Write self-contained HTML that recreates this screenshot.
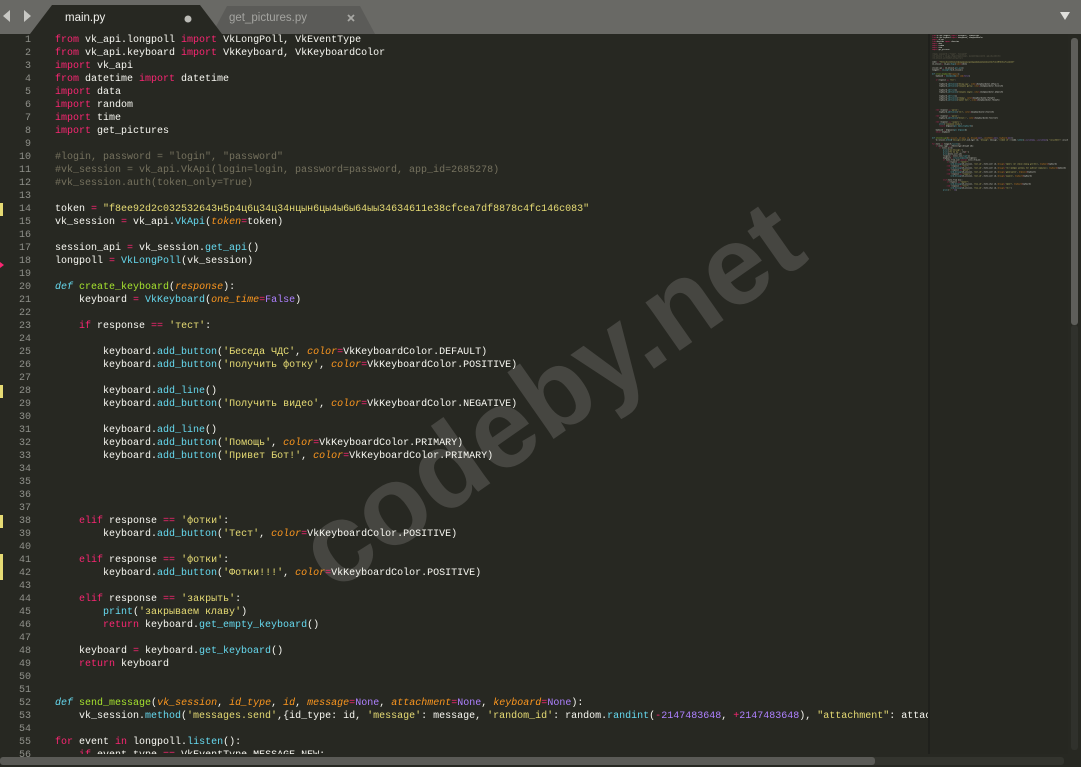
<!DOCTYPE html>
<html><head><meta charset="utf-8"><style>
*{margin:0;padding:0;box-sizing:border-box}
body{width:1081px;height:767px;overflow:hidden;background:#272822;position:relative;font-family:"Liberation Mono","DejaVu Sans Mono",monospace}
#bar{position:absolute;left:0;top:0;width:1081px;height:34px;background:#696965}
#gut{position:absolute;left:0;top:34px;width:50px;height:720px}
.ln{position:absolute;right:1051px;width:40px;text-align:right;font-size:10px;color:#8f908a;line-height:13px}
pre{position:absolute;left:55px;top:34px;font-size:10px;line-height:13px;color:#f8f8f2;font-family:"Liberation Mono","DejaVu Sans Mono",monospace;white-space:pre}
#codewrap{position:absolute;left:0;top:0;width:928px;height:754px;overflow:hidden;z-index:2}
.k{color:#f92672}.s{color:#e6db74}.c{color:#75715e}.f{color:#a6e22e}.b{color:#66d9ef}.p{color:#fd971f;font-style:italic}.n{color:#ae81ff}.d{color:#66d9ef;font-style:italic}
#wm{position:absolute;left:230px;top:330px;font-family:"Liberation Sans",sans-serif;font-weight:bold;font-size:112px;color:#464641;transform:rotate(-35deg);transform-origin:center;z-index:1;white-space:nowrap;width:640px;text-align:center}
#mini{position:absolute;left:928px;top:34px;width:140px;height:720px;overflow:hidden;background:#262721;border-left:2px solid #1f201c}
#mini pre{left:2px;top:1px;transform:scale(0.154);transform-origin:0 0}
.mk{position:absolute;left:0;width:3px;height:13px;background:#e6db74}
</style></head><body>
<div id="bar">
<svg width="1081" height="34" style="position:absolute;left:0;top:0">
<polygon points="212,34 227,6 360,6 375,34" fill="#5b5b58"/>
<polygon points="30,34 52,5 200,5 222,34" fill="#272822"/>
<polygon points="10,10 10,22 3,16" fill="#c8c8c4"/>
<polygon points="24,10 24,22 31,16" fill="#c8c8c4"/>
<circle cx="188" cy="19" r="3.5" fill="#bbbbb6"/>
<path d="M348,15 L354,21 M354,15 L348,21" stroke="#a8a8a4" stroke-width="1.8"/>
<polygon points="1060,12 1070,12 1065,20" fill="#e0e0dc"/>
</svg>
<div style="position:absolute;left:65px;top:12px;font-family:'Liberation Sans',sans-serif;font-size:11.5px;color:#f0f0ec">main.py</div>
<div style="position:absolute;left:229px;top:12px;font-family:'Liberation Sans',sans-serif;font-size:11.5px;color:#a4a4a0">get_pictures.py</div>
</div>
<div id="wm">codeby.net</div>
<div class="mk" style="top:203px"></div>
<div class="mk" style="top:385px"></div>
<div class="mk" style="top:515px"></div>
<div class="mk" style="top:554px;height:26px"></div>
<div style="position:absolute;left:0;top:262px;width:0;height:0;border-left:4px solid #f92672;border-top:3px solid transparent;border-bottom:3px solid transparent"></div>
<div id="gut"><pre style="left:0;top:0;width:31px;text-align:right;color:#8f908a">1
2
3
4
5
6
7
8
9
10
11
12
13
14
15
16
17
18
19
20
21
22
23
24
25
26
27
28
29
30
31
32
33
34
35
36
37
38
39
40
41
42
43
44
45
46
47
48
49
50
51
52
53
54
55
56</pre></div>
<div id="codewrap"><pre id="code"><span class="k">from</span> vk_api.longpoll <span class="k">import</span> VkLongPoll, VkEventType
<span class="k">from</span> vk_api.keyboard <span class="k">import</span> VkKeyboard, VkKeyboardColor
<span class="k">import</span> vk_api
<span class="k">from</span> datetime <span class="k">import</span> datetime
<span class="k">import</span> data
<span class="k">import</span> random
<span class="k">import</span> time
<span class="k">import</span> get_pictures

<span class="c">#login, password = "login", "password"</span>
<span class="c">#vk_session = vk_api.VkApi(login=login, password=password, app_id=2685278)</span>
<span class="c">#vk_session.auth(token_only=True)</span>

token <span class="k">=</span> <span class="s">"f8ee92d2c032532643н5р4ц6ц34ц34нцын6цы4ы6ы64ыы34634611e38cfcea7df8878c4fc146c083"</span>
vk_session <span class="k">=</span> vk_api.<span class="b">VkApi</span>(<span class="p">token</span><span class="k">=</span>token)

session_api <span class="k">=</span> vk_session.<span class="b">get_api</span>()
longpoll <span class="k">=</span> <span class="b">VkLongPoll</span>(vk_session)

<span class="d">def</span> <span class="f">create_keyboard</span>(<span class="p">response</span>):
    keyboard <span class="k">=</span> <span class="b">VkKeyboard</span>(<span class="p">one_time</span><span class="k">=</span><span class="n">False</span>)

    <span class="k">if</span> response <span class="k">==</span> <span class="s">'тест'</span>:

        keyboard.<span class="b">add_button</span>(<span class="s">'Беседа ЧДС'</span>, <span class="p">color</span><span class="k">=</span>VkKeyboardColor.DEFAULT)
        keyboard.<span class="b">add_button</span>(<span class="s">'получить фотку'</span>, <span class="p">color</span><span class="k">=</span>VkKeyboardColor.POSITIVE)

        keyboard.<span class="b">add_line</span>()
        keyboard.<span class="b">add_button</span>(<span class="s">'Получить видео'</span>, <span class="p">color</span><span class="k">=</span>VkKeyboardColor.NEGATIVE)

        keyboard.<span class="b">add_line</span>()
        keyboard.<span class="b">add_button</span>(<span class="s">'Помощь'</span>, <span class="p">color</span><span class="k">=</span>VkKeyboardColor.PRIMARY)
        keyboard.<span class="b">add_button</span>(<span class="s">'Привет Бот!'</span>, <span class="p">color</span><span class="k">=</span>VkKeyboardColor.PRIMARY)




    <span class="k">elif</span> response <span class="k">==</span> <span class="s">'фотки'</span>:
        keyboard.<span class="b">add_button</span>(<span class="s">'Тест'</span>, <span class="p">color</span><span class="k">=</span>VkKeyboardColor.POSITIVE)

    <span class="k">elif</span> response <span class="k">==</span> <span class="s">'фотки'</span>:
        keyboard.<span class="b">add_button</span>(<span class="s">'Фотки!!!'</span>, <span class="p">color</span><span class="k">=</span>VkKeyboardColor.POSITIVE)

    <span class="k">elif</span> response <span class="k">==</span> <span class="s">'закрыть'</span>:
        <span class="b">print</span>(<span class="s">'закрываем клаву'</span>)
        <span class="k">return</span> keyboard.<span class="b">get_empty_keyboard</span>()

    keyboard <span class="k">=</span> keyboard.<span class="b">get_keyboard</span>()
    <span class="k">return</span> keyboard


<span class="d">def</span> <span class="f">send_message</span>(<span class="p">vk_session</span>, <span class="p">id_type</span>, <span class="p">id</span>, <span class="p">message</span><span class="k">=</span><span class="n">None</span>, <span class="p">attachment</span><span class="k">=</span><span class="n">None</span>, <span class="p">keyboard</span><span class="k">=</span><span class="n">None</span>):
    vk_session.<span class="b">method</span>(<span class="s">'messages.send'</span>,{id_type: id, <span class="s">'message'</span>: message, <span class="s">'random_id'</span>: random.<span class="b">randint</span>(<span class="k">-</span><span class="n">2147483648</span>, <span class="k">+</span><span class="n">2147483648</span>), <span class="s">"attachment"</span>: attachment, <span class="s">'keyboard'</span>: keyboard})

<span class="k">for</span> event <span class="k">in</span> longpoll.<span class="b">listen</span>():
    <span class="k">if</span> event.type <span class="k">==</span> VkEventType.MESSAGE_NEW:</pre></div>
<div id="mini"><pre id="mc"></pre></div>
<div style="position:absolute;left:1071px;top:38px;width:7px;height:287px;background:#5e5e5a;border-radius:3px"></div>
<div style="position:absolute;left:1071px;top:325px;width:7px;height:425px;background:#30312c;border-radius:3px"></div>
<div style="position:absolute;left:0;top:757px;width:1064px;height:8px;background:#33342e;border-radius:3px"></div>
<div style="position:absolute;left:0;top:757px;width:875px;height:8px;background:#5a5a56;border-radius:3px"></div>
<script>
var src=document.getElementById('code').innerHTML;
var extra='\n        <span class="k">if</span> event.to_me:\n            <span class="b">print</span>(<span class="s">\'New message:\'</span>)\n            <span class="b">print</span>(<span class="s">\'For me by: \'</span>, end<span class="k">=</span><span class="s">\'\'</span>)\n            <span class="b">print</span>(event.user_id)\n            response <span class="k">=</span> event.text.<span class="b">lower</span>()\n            keyboard <span class="k">=</span> <span class="b">create_keyboard</span>(response)\n            <span class="k">if</span> event.from_user <span class="k">and not</span> event.from_me:\n                <span class="k">if</span> response <span class="k">==</span> <span class="s">"привет"</span>:\n                    <span class="b">send_message</span>(vk_session, <span class="s">\'user_id\'</span>, event.user_id, <span class="p">message</span><span class="k">=</span><span class="s">\'Привет, вот список команд для бота\'</span>, <span class="p">keyboard</span><span class="k">=</span>keyboard)\n                <span class="k">elif</span> response <span class="k">==</span> <span class="s">"тест"</span>:\n                    <span class="b">send_message</span>(vk_session, <span class="s">\'user_id\'</span>, event.user_id, <span class="p">message</span><span class="k">=</span><span class="s">\'Тест пройден успешно, бот работает нормально\'</span>, <span class="p">keyboard</span><span class="k">=</span>keyboard)\n                <span class="k">elif</span> response <span class="k">==</span> <span class="s">"фотки"</span>:\n                    <span class="b">send_message</span>(vk_session, <span class="s">\'user_id\'</span>, event.user_id, <span class="p">message</span><span class="k">=</span><span class="s">\'Держи фотки\'</span>, <span class="p">keyboard</span><span class="k">=</span>keyboard)\n                <span class="k">elif</span> response <span class="k">==</span> <span class="s">"закрыть"</span>:\n                    <span class="b">send_message</span>(vk_session, <span class="s">\'user_id\'</span>, event.user_id, <span class="p">message</span><span class="k">=</span><span class="s">\'Закрыть\'</span>, <span class="p">keyboard</span><span class="k">=</span>keyboard)\n\n            <span class="k">elif</span> event.from_chat:\n                <span class="k">if</span> response <span class="k">==</span> <span class="s">"привет"</span>:\n                    <span class="b">send_message</span>(vk_session, <span class="s">\'chat_id\'</span>, event.chat_id, <span class="p">message</span><span class="k">=</span><span class="s">\'Привет\'</span>, <span class="p">keyboard</span><span class="k">=</span>keyboard)\n                <span class="k">elif</span> response <span class="k">==</span> <span class="s">"тест"</span>:\n                    <span class="b">send_message</span>(vk_session, <span class="s">\'chat_id\'</span>, event.chat_id, <span class="p">message</span><span class="k">=</span><span class="s">\'Тест\'</span>)\n            <span class="b">print</span>(<span class="s">\'-\'</span> <span class="k">*</span> <span class="n">30</span>)';
document.getElementById('mc').innerHTML=src+extra;
</script>
</body></html>
